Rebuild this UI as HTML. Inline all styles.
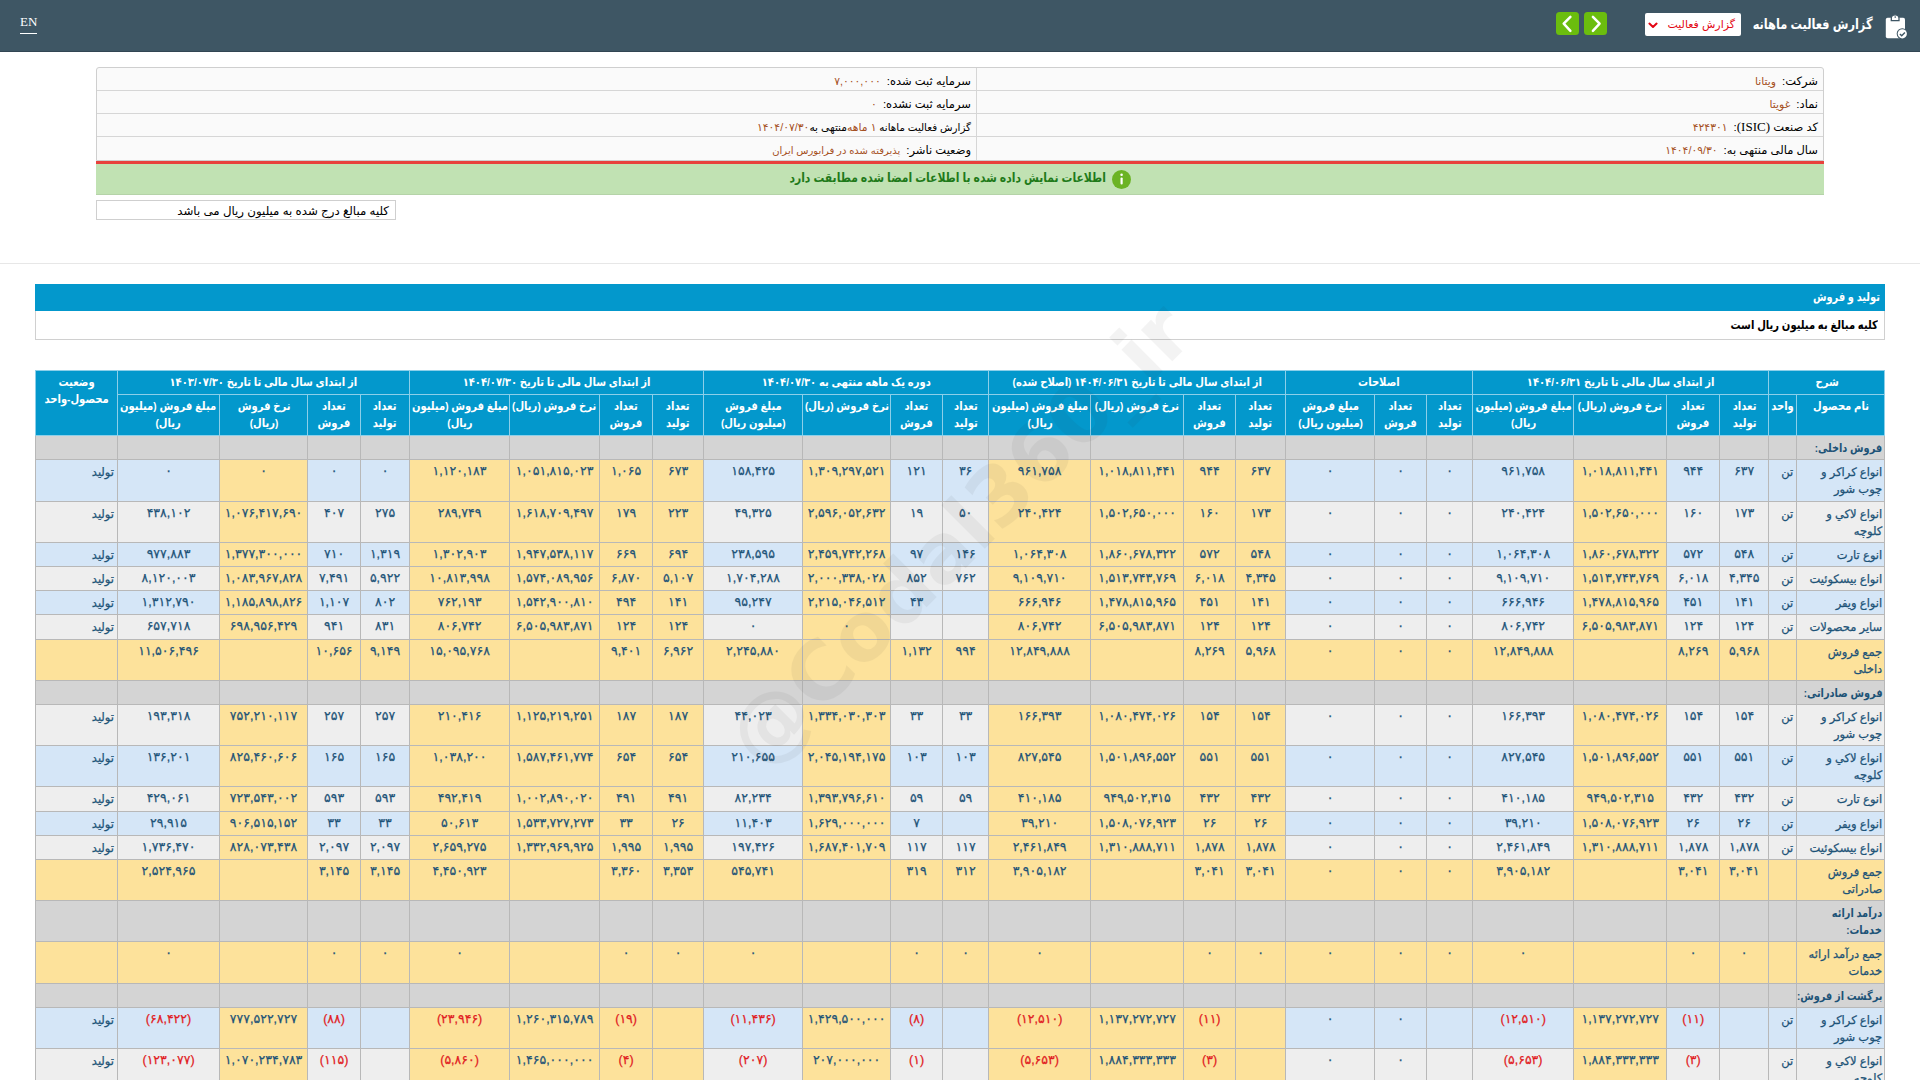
<!DOCTYPE html>
<html lang="fa" dir="rtl">
<head>
<meta charset="utf-8">
<title>گزارش فعالیت ماهانه</title>
<style>
*{box-sizing:border-box}
html,body{margin:0;padding:0}
body{width:1920px;height:1080px;overflow:hidden;background:#fff;position:relative;direction:rtl;
 font-family:"Liberation Sans","DejaVu Sans",sans-serif;color:#000}
.topbar{position:absolute;left:0;top:0;width:1920px;height:52px;background:#3e5664;border-bottom:1px solid #324653}
.en{position:absolute;left:20px;top:14px;width:17px;height:20px;border-bottom:1px solid #fff;color:#fff;
 font-family:"Liberation Serif",serif;font-size:13px;line-height:15px;direction:ltr;text-align:left}
.clip{position:absolute;left:1876px;top:8px;width:40px;height:36px}
.ttl{position:absolute;right:47px;top:12px;height:24px;line-height:24px;color:#fff;font-weight:bold;font-size:14px;white-space:nowrap;transform:scaleX(.8125);transform-origin:100% 50%}
.sel{position:absolute;left:1645px;top:13px;width:96px;height:23px;background:#fff;border-radius:2px;color:#e30613;
 font-size:11px;line-height:22px;padding-right:6px;white-space:nowrap}
.sel span{display:inline-block}
.sel svg{position:absolute;left:2.5px;top:8.5px}
.nav{position:absolute;top:12px;width:23px;height:23px;background:#6bbd0e;border-radius:3.5px}
.nav svg{position:absolute;left:0;top:0}
.info{position:absolute;left:96px;top:67px;width:1728px;height:94px;border:1px solid #cfcfcf;border-radius:3px 3px 0 0;background:#fafafa}
.info .r{position:absolute;right:0;width:846px;height:23px;line-height:26px;font-size:11.5px;padding-right:5px;white-space:nowrap;border-bottom:1px solid #d6d6d6}
.info .l{position:absolute;left:0;width:880px;height:23px;line-height:26px;font-size:11.5px;padding-right:5px;white-space:nowrap;border-bottom:1px solid #d6d6d6;border-right:1px solid #d6d6d6}
.info .v{color:#a5501e;margin-right:6px;font-size:10.8px}
.info .lat{font-family:"Liberation Serif",serif;font-size:13px}
.redln{position:absolute;left:96px;top:161px;width:1728px;height:3px;background:#e8413c}
.ok{position:absolute;left:96px;top:164px;width:1728px;height:31px;background:#c1e2b3;border-bottom:1px solid #b5d3a8;
 text-align:center;color:#1f7a1a;font-size:13px;line-height:27px;font-weight:bold;white-space:nowrap}
.ok span{display:inline-block;transform:scaleX(.83);transform-origin:50% 50%;margin:0 -32.400px}
.ok .ic{display:inline-block;vertical-align:middle;width:19px;height:19px;margin-left:6px;position:relative;top:.5px}
.note{position:absolute;left:96px;top:200px;width:300px;height:20px;border:1px solid #cfcfcf;font-size:11.8px;line-height:20px;padding-right:6px;white-space:nowrap}
.hr{position:absolute;left:0;top:263px;width:1920px;height:1px;background:#e7e7e7}
.sect{position:absolute;left:35px;top:284px;width:1850px;height:27px;background:#0398cc;color:#fff;font-weight:bold;font-size:12px;line-height:27px;padding-right:5px}
.sect span,.sub span{display:inline-block;transform-origin:100% 50%;white-space:nowrap}
.sect span{transform:scaleX(.817)}
.sub span{transform:scaleX(.833)}
.sub{position:absolute;left:35px;top:311px;width:1850px;height:29px;border:1px solid #d0d0d0;border-top:0;font-weight:bold;font-size:12px;line-height:28px;padding-right:6px}
.wm{position:absolute;left:559px;top:475px;width:800px;height:120px;transform:rotate(-45deg);transform-origin:50% 50%;
 font-family:"DejaVu Sans",sans-serif;font-size:81px;line-height:120px;color:#282828;opacity:.052;direction:ltr;text-align:center;white-space:nowrap;pointer-events:none;font-weight:bold}
table.grid{position:absolute;left:35px;top:370px;width:1850px;table-layout:fixed;border-collapse:separate;border-spacing:0;
 border-top:1px solid #8ccfe9;direction:rtl}
table.grid th,table.grid td{padding:0;margin:0;overflow:hidden;white-space:nowrap;vertical-align:top}
table.grid th{background:#0398cc;color:#fff;font-weight:bold;font-size:11.5px;line-height:17px;text-align:center;
 border-left:1px solid #8ccfe9;border-bottom:1px solid #8ccfe9;padding-top:3px}
table.grid td{font-size:12.5px;line-height:17px;color:#1d5377;-webkit-text-stroke:.25px #1d5377;text-align:center;border-left:1px solid #b8b8b8;border-bottom:1px solid #b8b8b8;padding-top:3px}
table.grid td.nm{text-align:right;padding-right:2px;padding-top:4px;font-size:11.5px}
table.grid td.un,table.grid td.st{text-align:right;padding-right:3px;padding-top:4px;font-size:11.5px}
table.grid th:first-child{border-right:1px solid #8ccfe9}
table.grid td:first-child{border-right:1px solid #b8b8b8}
td.b{background:#d5e6f7}
td.g{background:#eeeeee}
td.y{background:#fde29b}
table.grid td.neg{color:#e11b22;-webkit-text-stroke-color:#e11b22}
tr.sec td{background:#d4d4d4;font-weight:bold}
table.grid tr.sec td.nm{font-size:11.5px;overflow:visible;-webkit-text-stroke:0}
tr.sec td.nm span{display:inline-block;transform:scaleX(.852);transform-origin:100% 50%;white-space:nowrap}
th .sx{width:115%;margin-right:-7.5%;transform:scaleX(.8696);transform-origin:50% 0}
</style>
</head>
<body>
<div class="topbar">
  <div class="en">EN</div>
  <div class="nav" style="left:1556px"><svg width="23" height="23" viewBox="0 0 23 23"><path d="M14.400 4.800 L7.700 11.700 L14.400 18.800" fill="none" stroke="#fff" stroke-width="2.500" stroke-linecap="round" stroke-linejoin="round"/></svg></div>
  <div class="nav" style="left:1584px"><svg width="23" height="23" viewBox="0 0 23 23"><path d="M8.900 4.800 L15.600 11.700 L8.900 18.800" fill="none" stroke="#fff" stroke-width="2.500" stroke-linecap="round" stroke-linejoin="round"/></svg></div>
  <div class="sel"><span>گزارش فعالیت</span><svg width="10" height="8" viewBox="0 0 10 8"><path d="M1.400 1.600 L5 5 L8.600 1.600" fill="none" stroke="#e30613" stroke-width="2" stroke-linecap="round" stroke-linejoin="round"/></svg></div>
  <div class="ttl">گزارش فعالیت ماهانه</div>
  <svg class="clip" viewBox="0 0 40 36"><rect x="9.800" y="9.700" width="19.200" height="20.500" rx="1.800" fill="#fff"/><path d="M15.300 12.700 V10.200 a3.850 3.400 0 0 1 7.700 0 V12.700 Z" fill="#fff" stroke="#3e5664" stroke-width="1.300"/><circle cx="19.200" cy="9.100" r="0.800" fill="#3e5664"/><circle cx="26.300" cy="25.800" r="5.600" fill="#3e5664"/><circle cx="26.300" cy="25.800" r="4.600" fill="#fff"/><path d="M23.900 26.100 l1.800 1.700 l3.200 -3.200" fill="none" stroke="#3e5664" stroke-width="1.400"/></svg>
</div>

<div class="info">
  <div class="r" style="top:0"><span class="k">شرکت:</span><span class="v">ویتانا</span></div>
  <div class="r" style="top:23px"><span class="k">نماد:</span><span class="v">غویتا</span></div>
  <div class="r" style="top:46px"><span class="k">کد صنعت <span class="lat">(ISIC)</span>:</span><span class="v">۴۲۴۳۰۱</span></div>
  <div class="r" style="top:69px;border-bottom:0"><span class="k">سال مالی منتهی به:</span><span class="v">۱۴۰۴/۰۹/۳۰</span></div>
  <div class="l" style="top:0"><span class="k">سرمایه ثبت شده:</span><span class="v">۷,۰۰۰,۰۰۰</span></div>
  <div class="l" style="top:23px"><span class="k">سرمایه ثبت نشده:</span><span class="v">۰</span></div>
  <div class="l" style="top:46px"><span class="k" style="font-size:10.3px">گزارش فعالیت ماهانه </span><span class="v" style="margin:0">۱ ماهه</span>&zwnj;<span class="k" style="font-size:10.7px">منتهی به</span><span class="v" style="margin:0">۱۴۰۴/۰۷/۳۰</span></div>
  <div class="l" style="top:69px;border-bottom:0"><span class="k">وضعیت ناشر:</span><span class="v" style="font-size:10px">پذیرفته شده در فرابورس ایران</span></div>
</div>
<div class="redln"></div>
<div class="ok"><svg class="ic" viewBox="0 0 19 19"><circle cx="9.500" cy="9.500" r="9.500" fill="#6bb324"/><rect x="8.500" y="7.500" width="2.200" height="7" rx="1" fill="#fff"/><circle cx="9.600" cy="4.800" r="1.300" fill="#fff"/></svg><span>اطلاعات نمایش داده شده با اطلاعات امضا شده مطابقت دارد</span></div>
<div class="note">کلیه مبالغ درج شده به میلیون ریال می باشد</div>
<div class="hr"></div>
<div class="sect"><span>تولید و فروش</span></div>
<div class="sub"><span>کلیه مبالغ به میلیون ریال است</span></div>

<table class="grid"><colgroup><col style="width:89px"><col style="width:28px"><col style="width:49px"><col style="width:53px"><col style="width:93px"><col style="width:101px"><col style="width:46px"><col style="width:52px"><col style="width:89px"><col style="width:50px"><col style="width:52px"><col style="width:93px"><col style="width:102px"><col style="width:46px"><col style="width:52px"><col style="width:88px"><col style="width:99px"><col style="width:51px"><col style="width:53px"><col style="width:90px"><col style="width:100px"><col style="width:49px"><col style="width:53px"><col style="width:88px"><col style="width:102px"><col style="width:82px"></colgroup><thead><tr style="height:24px"><th colspan="2"><div class="sx">شرح</div></th><th colspan="4"><div class="sx">از ابتدای سال مالی تا تاریخ ۱۴۰۴/۰۶/۳۱</div></th><th colspan="3"><div class="sx">اصلاحات</div></th><th colspan="4"><div class="sx">از ابتدای سال مالی تا تاریخ ۱۴۰۴/۰۶/۳۱ (اصلاح شده)</div></th><th colspan="4"><div class="sx">دوره یک ماهه منتهی به ۱۴۰۴/۰۷/۳۰</div></th><th colspan="4"><div class="sx">از ابتدای سال مالی تا تاریخ ۱۴۰۴/۰۷/۳۰</div></th><th colspan="4"><div class="sx">از ابتدای سال مالی تا تاریخ ۱۴۰۳/۰۷/۳۰</div></th><th rowspan="2"><div class="sx">وضعیت<br>محصول-واحد</div></th></tr><tr style="height:41px"><th><div class="sx">نام محصول</div></th><th><div class="sx">واحد</div></th><th><div class="sx">تعداد<br>تولید</div></th><th><div class="sx">تعداد<br>فروش</div></th><th><div class="sx">نرخ فروش (ریال)</div></th><th><div class="sx">مبلغ فروش (میلیون<br>ریال)</div></th><th><div class="sx">تعداد<br>تولید</div></th><th><div class="sx">تعداد<br>فروش</div></th><th><div class="sx">مبلغ فروش<br>(میلیون ریال)</div></th><th><div class="sx">تعداد<br>تولید</div></th><th><div class="sx">تعداد<br>فروش</div></th><th><div class="sx">نرخ فروش (ریال)</div></th><th><div class="sx">مبلغ فروش (میلیون<br>ریال)</div></th><th><div class="sx">تعداد<br>تولید</div></th><th><div class="sx">تعداد<br>فروش</div></th><th><div class="sx">نرخ فروش (ریال)</div></th><th><div class="sx">مبلغ فروش<br>(میلیون ریال)</div></th><th><div class="sx">تعداد<br>تولید</div></th><th><div class="sx">تعداد<br>فروش</div></th><th><div class="sx">نرخ فروش (ریال)</div></th><th><div class="sx">مبلغ فروش (میلیون<br>ریال)</div></th><th><div class="sx">تعداد<br>تولید</div></th><th><div class="sx">تعداد<br>فروش</div></th><th><div class="sx">نرخ فروش<br>(ریال)</div></th><th><div class="sx">مبلغ فروش (میلیون<br>ریال)</div></th></tr></thead><tbody><tr class="sec" style="height:24px"><td class="nm"><span>فروش داخلی:</span></td><td></td><td></td><td></td><td></td><td></td><td></td><td></td><td></td><td></td><td></td><td></td><td></td><td></td><td></td><td></td><td></td><td></td><td></td><td></td><td></td><td></td><td></td><td></td><td></td><td></td></tr>
<tr style="height:42px"><td class="nm b">انواع کراکر و<br>چوب شور</td><td class="un b">تن</td><td class="b">۶۳۷</td><td class="b">۹۴۴</td><td class="y">۱,۰۱۸,۸۱۱,۴۴۱</td><td class="b">۹۶۱,۷۵۸</td><td class="b">۰</td><td class="b">۰</td><td class="b">۰</td><td class="y">۶۳۷</td><td class="y">۹۴۴</td><td class="y">۱,۰۱۸,۸۱۱,۴۴۱</td><td class="y">۹۶۱,۷۵۸</td><td class="b">۳۶</td><td class="b">۱۲۱</td><td class="y">۱,۳۰۹,۲۹۷,۵۲۱</td><td class="b">۱۵۸,۴۲۵</td><td class="y">۶۷۳</td><td class="y">۱,۰۶۵</td><td class="y">۱,۰۵۱,۸۱۵,۰۲۳</td><td class="y">۱,۱۲۰,۱۸۳</td><td class="b">۰</td><td class="b">۰</td><td class="y">۰</td><td class="b">۰</td><td class="st b">تولید</td></tr>
<tr style="height:41px"><td class="nm g">انواع لاکي و<br>کلوچه</td><td class="un g">تن</td><td class="g">۱۷۳</td><td class="g">۱۶۰</td><td class="y">۱,۵۰۲,۶۵۰,۰۰۰</td><td class="g">۲۴۰,۴۲۴</td><td class="g">۰</td><td class="g">۰</td><td class="g">۰</td><td class="y">۱۷۳</td><td class="y">۱۶۰</td><td class="y">۱,۵۰۲,۶۵۰,۰۰۰</td><td class="y">۲۴۰,۴۲۴</td><td class="g">۵۰</td><td class="g">۱۹</td><td class="y">۲,۵۹۶,۰۵۲,۶۳۲</td><td class="g">۴۹,۳۲۵</td><td class="y">۲۲۳</td><td class="y">۱۷۹</td><td class="y">۱,۶۱۸,۷۰۹,۴۹۷</td><td class="y">۲۸۹,۷۴۹</td><td class="g">۲۷۵</td><td class="g">۴۰۷</td><td class="y">۱,۰۷۶,۴۱۷,۶۹۰</td><td class="g">۴۳۸,۱۰۲</td><td class="st g">تولید</td></tr>
<tr style="height:24px"><td class="nm b">انوع تارت</td><td class="un b">تن</td><td class="b">۵۴۸</td><td class="b">۵۷۲</td><td class="y">۱,۸۶۰,۶۷۸,۳۲۲</td><td class="b">۱,۰۶۴,۳۰۸</td><td class="b">۰</td><td class="b">۰</td><td class="b">۰</td><td class="y">۵۴۸</td><td class="y">۵۷۲</td><td class="y">۱,۸۶۰,۶۷۸,۳۲۲</td><td class="y">۱,۰۶۴,۳۰۸</td><td class="b">۱۴۶</td><td class="b">۹۷</td><td class="y">۲,۴۵۹,۷۴۲,۲۶۸</td><td class="b">۲۳۸,۵۹۵</td><td class="y">۶۹۴</td><td class="y">۶۶۹</td><td class="y">۱,۹۴۷,۵۳۸,۱۱۷</td><td class="y">۱,۳۰۲,۹۰۳</td><td class="b">۱,۳۱۹</td><td class="b">۷۱۰</td><td class="y">۱,۳۷۷,۳۰۰,۰۰۰</td><td class="b">۹۷۷,۸۸۳</td><td class="st b">تولید</td></tr>
<tr style="height:24px"><td class="nm g">انواع بیسکوئیت</td><td class="un g">تن</td><td class="g">۴,۳۴۵</td><td class="g">۶,۰۱۸</td><td class="y">۱,۵۱۳,۷۴۳,۷۶۹</td><td class="g">۹,۱۰۹,۷۱۰</td><td class="g">۰</td><td class="g">۰</td><td class="g">۰</td><td class="y">۴,۳۴۵</td><td class="y">۶,۰۱۸</td><td class="y">۱,۵۱۳,۷۴۳,۷۶۹</td><td class="y">۹,۱۰۹,۷۱۰</td><td class="g">۷۶۲</td><td class="g">۸۵۲</td><td class="y">۲,۰۰۰,۳۳۸,۰۲۸</td><td class="g">۱,۷۰۴,۲۸۸</td><td class="y">۵,۱۰۷</td><td class="y">۶,۸۷۰</td><td class="y">۱,۵۷۴,۰۸۹,۹۵۶</td><td class="y">۱۰,۸۱۳,۹۹۸</td><td class="g">۵,۹۲۲</td><td class="g">۷,۴۹۱</td><td class="y">۱,۰۸۳,۹۶۷,۸۲۸</td><td class="g">۸,۱۲۰,۰۰۳</td><td class="st g">تولید</td></tr>
<tr style="height:24px"><td class="nm b">انواع ویفر</td><td class="un b">تن</td><td class="b">۱۴۱</td><td class="b">۴۵۱</td><td class="y">۱,۴۷۸,۸۱۵,۹۶۵</td><td class="b">۶۶۶,۹۴۶</td><td class="b">۰</td><td class="b">۰</td><td class="b">۰</td><td class="y">۱۴۱</td><td class="y">۴۵۱</td><td class="y">۱,۴۷۸,۸۱۵,۹۶۵</td><td class="y">۶۶۶,۹۴۶</td><td class="b"></td><td class="b">۴۳</td><td class="y">۲,۲۱۵,۰۴۶,۵۱۲</td><td class="b">۹۵,۲۴۷</td><td class="y">۱۴۱</td><td class="y">۴۹۴</td><td class="y">۱,۵۴۲,۹۰۰,۸۱۰</td><td class="y">۷۶۲,۱۹۳</td><td class="b">۸۰۲</td><td class="b">۱,۱۰۷</td><td class="y">۱,۱۸۵,۸۹۸,۸۲۶</td><td class="b">۱,۳۱۲,۷۹۰</td><td class="st b">تولید</td></tr>
<tr style="height:25px"><td class="nm g">سایر محصولات</td><td class="un g">تن</td><td class="g">۱۲۴</td><td class="g">۱۲۴</td><td class="y">۶,۵۰۵,۹۸۳,۸۷۱</td><td class="g">۸۰۶,۷۴۲</td><td class="g">۰</td><td class="g">۰</td><td class="g">۰</td><td class="y">۱۲۴</td><td class="y">۱۲۴</td><td class="y">۶,۵۰۵,۹۸۳,۸۷۱</td><td class="y">۸۰۶,۷۴۲</td><td class="g"></td><td class="g"></td><td class="y">۰</td><td class="g">۰</td><td class="y">۱۲۴</td><td class="y">۱۲۴</td><td class="y">۶,۵۰۵,۹۸۳,۸۷۱</td><td class="y">۸۰۶,۷۴۲</td><td class="g">۸۳۱</td><td class="g">۹۴۱</td><td class="y">۶۹۸,۹۵۶,۴۲۹</td><td class="g">۶۵۷,۷۱۸</td><td class="st g">تولید</td></tr>
<tr style="height:41px"><td class="nm y">جمع فروش<br>داخلی</td><td class="un y"></td><td class="y">۵,۹۶۸</td><td class="y">۸,۲۶۹</td><td class="y"></td><td class="y">۱۲,۸۴۹,۸۸۸</td><td class="y">۰</td><td class="y">۰</td><td class="y">۰</td><td class="y">۵,۹۶۸</td><td class="y">۸,۲۶۹</td><td class="y"></td><td class="y">۱۲,۸۴۹,۸۸۸</td><td class="y">۹۹۴</td><td class="y">۱,۱۳۲</td><td class="y"></td><td class="y">۲,۲۴۵,۸۸۰</td><td class="y">۶,۹۶۲</td><td class="y">۹,۴۰۱</td><td class="y"></td><td class="y">۱۵,۰۹۵,۷۶۸</td><td class="y">۹,۱۴۹</td><td class="y">۱۰,۶۵۶</td><td class="y"></td><td class="y">۱۱,۵۰۶,۴۹۶</td><td class="st y"></td></tr>
<tr class="sec" style="height:24px"><td class="nm"><span>فروش صادراتی:</span></td><td></td><td></td><td></td><td></td><td></td><td></td><td></td><td></td><td></td><td></td><td></td><td></td><td></td><td></td><td></td><td></td><td></td><td></td><td></td><td></td><td></td><td></td><td></td><td></td><td></td></tr>
<tr style="height:41px"><td class="nm g">انواع کراکر و<br>چوب شور</td><td class="un g">تن</td><td class="g">۱۵۴</td><td class="g">۱۵۴</td><td class="y">۱,۰۸۰,۴۷۴,۰۲۶</td><td class="g">۱۶۶,۳۹۳</td><td class="g">۰</td><td class="g">۰</td><td class="g">۰</td><td class="y">۱۵۴</td><td class="y">۱۵۴</td><td class="y">۱,۰۸۰,۴۷۴,۰۲۶</td><td class="y">۱۶۶,۳۹۳</td><td class="g">۳۳</td><td class="g">۳۳</td><td class="y">۱,۳۳۴,۰۳۰,۳۰۳</td><td class="g">۴۴,۰۲۳</td><td class="y">۱۸۷</td><td class="y">۱۸۷</td><td class="y">۱,۱۲۵,۲۱۹,۲۵۱</td><td class="y">۲۱۰,۴۱۶</td><td class="g">۲۵۷</td><td class="g">۲۵۷</td><td class="y">۷۵۲,۲۱۰,۱۱۷</td><td class="g">۱۹۳,۳۱۸</td><td class="st g">تولید</td></tr>
<tr style="height:41px"><td class="nm b">انواع لاکي و<br>کلوچه</td><td class="un b">تن</td><td class="b">۵۵۱</td><td class="b">۵۵۱</td><td class="y">۱,۵۰۱,۸۹۶,۵۵۲</td><td class="b">۸۲۷,۵۴۵</td><td class="b">۰</td><td class="b">۰</td><td class="b">۰</td><td class="y">۵۵۱</td><td class="y">۵۵۱</td><td class="y">۱,۵۰۱,۸۹۶,۵۵۲</td><td class="y">۸۲۷,۵۴۵</td><td class="b">۱۰۳</td><td class="b">۱۰۳</td><td class="y">۲,۰۴۵,۱۹۴,۱۷۵</td><td class="b">۲۱۰,۶۵۵</td><td class="y">۶۵۴</td><td class="y">۶۵۴</td><td class="y">۱,۵۸۷,۴۶۱,۷۷۴</td><td class="y">۱,۰۳۸,۲۰۰</td><td class="b">۱۶۵</td><td class="b">۱۶۵</td><td class="y">۸۲۵,۴۶۰,۶۰۶</td><td class="b">۱۳۶,۲۰۱</td><td class="st b">تولید</td></tr>
<tr style="height:25px"><td class="nm g">انوع تارت</td><td class="un g">تن</td><td class="g">۴۳۲</td><td class="g">۴۳۲</td><td class="y">۹۴۹,۵۰۲,۳۱۵</td><td class="g">۴۱۰,۱۸۵</td><td class="g">۰</td><td class="g">۰</td><td class="g">۰</td><td class="y">۴۳۲</td><td class="y">۴۳۲</td><td class="y">۹۴۹,۵۰۲,۳۱۵</td><td class="y">۴۱۰,۱۸۵</td><td class="g">۵۹</td><td class="g">۵۹</td><td class="y">۱,۳۹۳,۷۹۶,۶۱۰</td><td class="g">۸۲,۲۳۴</td><td class="y">۴۹۱</td><td class="y">۴۹۱</td><td class="y">۱,۰۰۲,۸۹۰,۰۲۰</td><td class="y">۴۹۲,۴۱۹</td><td class="g">۵۹۳</td><td class="g">۵۹۳</td><td class="y">۷۲۳,۵۴۳,۰۰۲</td><td class="g">۴۲۹,۰۶۱</td><td class="st g">تولید</td></tr>
<tr style="height:24px"><td class="nm b">انواع ویفر</td><td class="un b">تن</td><td class="b">۲۶</td><td class="b">۲۶</td><td class="y">۱,۵۰۸,۰۷۶,۹۲۳</td><td class="b">۳۹,۲۱۰</td><td class="b">۰</td><td class="b">۰</td><td class="b">۰</td><td class="y">۲۶</td><td class="y">۲۶</td><td class="y">۱,۵۰۸,۰۷۶,۹۲۳</td><td class="y">۳۹,۲۱۰</td><td class="b"></td><td class="b">۷</td><td class="y">۱,۶۲۹,۰۰۰,۰۰۰</td><td class="b">۱۱,۴۰۳</td><td class="y">۲۶</td><td class="y">۳۳</td><td class="y">۱,۵۳۳,۷۲۷,۲۷۳</td><td class="y">۵۰,۶۱۳</td><td class="b">۳۳</td><td class="b">۳۳</td><td class="y">۹۰۶,۵۱۵,۱۵۲</td><td class="b">۲۹,۹۱۵</td><td class="st b">تولید</td></tr>
<tr style="height:24px"><td class="nm g">انواع بیسکوئیت</td><td class="un g">تن</td><td class="g">۱,۸۷۸</td><td class="g">۱,۸۷۸</td><td class="y">۱,۳۱۰,۸۸۸,۷۱۱</td><td class="g">۲,۴۶۱,۸۴۹</td><td class="g">۰</td><td class="g">۰</td><td class="g">۰</td><td class="y">۱,۸۷۸</td><td class="y">۱,۸۷۸</td><td class="y">۱,۳۱۰,۸۸۸,۷۱۱</td><td class="y">۲,۴۶۱,۸۴۹</td><td class="g">۱۱۷</td><td class="g">۱۱۷</td><td class="y">۱,۶۸۷,۴۰۱,۷۰۹</td><td class="g">۱۹۷,۴۲۶</td><td class="y">۱,۹۹۵</td><td class="y">۱,۹۹۵</td><td class="y">۱,۳۳۲,۹۶۹,۹۲۵</td><td class="y">۲,۶۵۹,۲۷۵</td><td class="g">۲,۰۹۷</td><td class="g">۲,۰۹۷</td><td class="y">۸۲۸,۰۷۳,۴۳۸</td><td class="g">۱,۷۳۶,۴۷۰</td><td class="st g">تولید</td></tr>
<tr style="height:41px"><td class="nm y">جمع فروش<br>صادراتی</td><td class="un y"></td><td class="y">۳,۰۴۱</td><td class="y">۳,۰۴۱</td><td class="y"></td><td class="y">۳,۹۰۵,۱۸۲</td><td class="y">۰</td><td class="y">۰</td><td class="y">۰</td><td class="y">۳,۰۴۱</td><td class="y">۳,۰۴۱</td><td class="y"></td><td class="y">۳,۹۰۵,۱۸۲</td><td class="y">۳۱۲</td><td class="y">۳۱۹</td><td class="y"></td><td class="y">۵۴۵,۷۴۱</td><td class="y">۳,۳۵۳</td><td class="y">۳,۳۶۰</td><td class="y"></td><td class="y">۴,۴۵۰,۹۲۳</td><td class="y">۳,۱۴۵</td><td class="y">۳,۱۴۵</td><td class="y"></td><td class="y">۲,۵۲۴,۹۶۵</td><td class="st y"></td></tr>
<tr class="sec" style="height:41px"><td class="nm"><span>درآمد ارائه</span><br><span>خدمات:</span></td><td></td><td></td><td></td><td></td><td></td><td></td><td></td><td></td><td></td><td></td><td></td><td></td><td></td><td></td><td></td><td></td><td></td><td></td><td></td><td></td><td></td><td></td><td></td><td></td><td></td></tr>
<tr style="height:42px"><td class="nm y">جمع درآمد ارائه<br>خدمات</td><td class="un y"></td><td class="y">۰</td><td class="y">۰</td><td class="y"></td><td class="y">۰</td><td class="y">۰</td><td class="y">۰</td><td class="y">۰</td><td class="y">۰</td><td class="y">۰</td><td class="y"></td><td class="y">۰</td><td class="y">۰</td><td class="y">۰</td><td class="y"></td><td class="y">۰</td><td class="y">۰</td><td class="y">۰</td><td class="y"></td><td class="y">۰</td><td class="y">۰</td><td class="y">۰</td><td class="y"></td><td class="y">۰</td><td class="st y"></td></tr>
<tr class="sec" style="height:24px"><td class="nm"><span>برگشت از فروش:</span></td><td></td><td></td><td></td><td></td><td></td><td></td><td></td><td></td><td></td><td></td><td></td><td></td><td></td><td></td><td></td><td></td><td></td><td></td><td></td><td></td><td></td><td></td><td></td><td></td><td></td></tr>
<tr style="height:41px"><td class="nm b">انواع کراکر و<br>چوب شور</td><td class="un b">تن</td><td class="b"></td><td class="b neg">(۱۱)</td><td class="y">۱,۱۳۷,۲۷۲,۷۲۷</td><td class="b neg">(۱۲,۵۱۰)</td><td class="b"></td><td class="b">۰</td><td class="b">۰</td><td class="y"></td><td class="y neg">(۱۱)</td><td class="y">۱,۱۳۷,۲۷۲,۷۲۷</td><td class="y neg">(۱۲,۵۱۰)</td><td class="b"></td><td class="b neg">(۸)</td><td class="y">۱,۴۲۹,۵۰۰,۰۰۰</td><td class="b neg">(۱۱,۴۳۶)</td><td class="y"></td><td class="y neg">(۱۹)</td><td class="y">۱,۲۶۰,۳۱۵,۷۸۹</td><td class="y neg">(۲۳,۹۴۶)</td><td class="b"></td><td class="b neg">(۸۸)</td><td class="y">۷۷۷,۵۲۲,۷۲۷</td><td class="b neg">(۶۸,۴۲۲)</td><td class="st b">تولید</td></tr>
<tr style="height:41px"><td class="nm g">انواع لاکي و<br>کلوچه</td><td class="un g">تن</td><td class="g"></td><td class="g neg">(۳)</td><td class="y">۱,۸۸۴,۳۳۳,۳۳۳</td><td class="g neg">(۵,۶۵۳)</td><td class="g"></td><td class="g">۰</td><td class="g">۰</td><td class="y"></td><td class="y neg">(۳)</td><td class="y">۱,۸۸۴,۳۳۳,۳۳۳</td><td class="y neg">(۵,۶۵۳)</td><td class="g"></td><td class="g neg">(۱)</td><td class="y">۲۰۷,۰۰۰,۰۰۰</td><td class="g neg">(۲۰۷)</td><td class="y"></td><td class="y neg">(۴)</td><td class="y">۱,۴۶۵,۰۰۰,۰۰۰</td><td class="y neg">(۵,۸۶۰)</td><td class="g"></td><td class="g neg">(۱۱۵)</td><td class="y">۱,۰۷۰,۲۳۴,۷۸۳</td><td class="g neg">(۱۲۳,۰۷۷)</td><td class="st g">تولید</td></tr></tbody></table>
<div class="wm">@Codal360_ir</div>
</body>
</html>
